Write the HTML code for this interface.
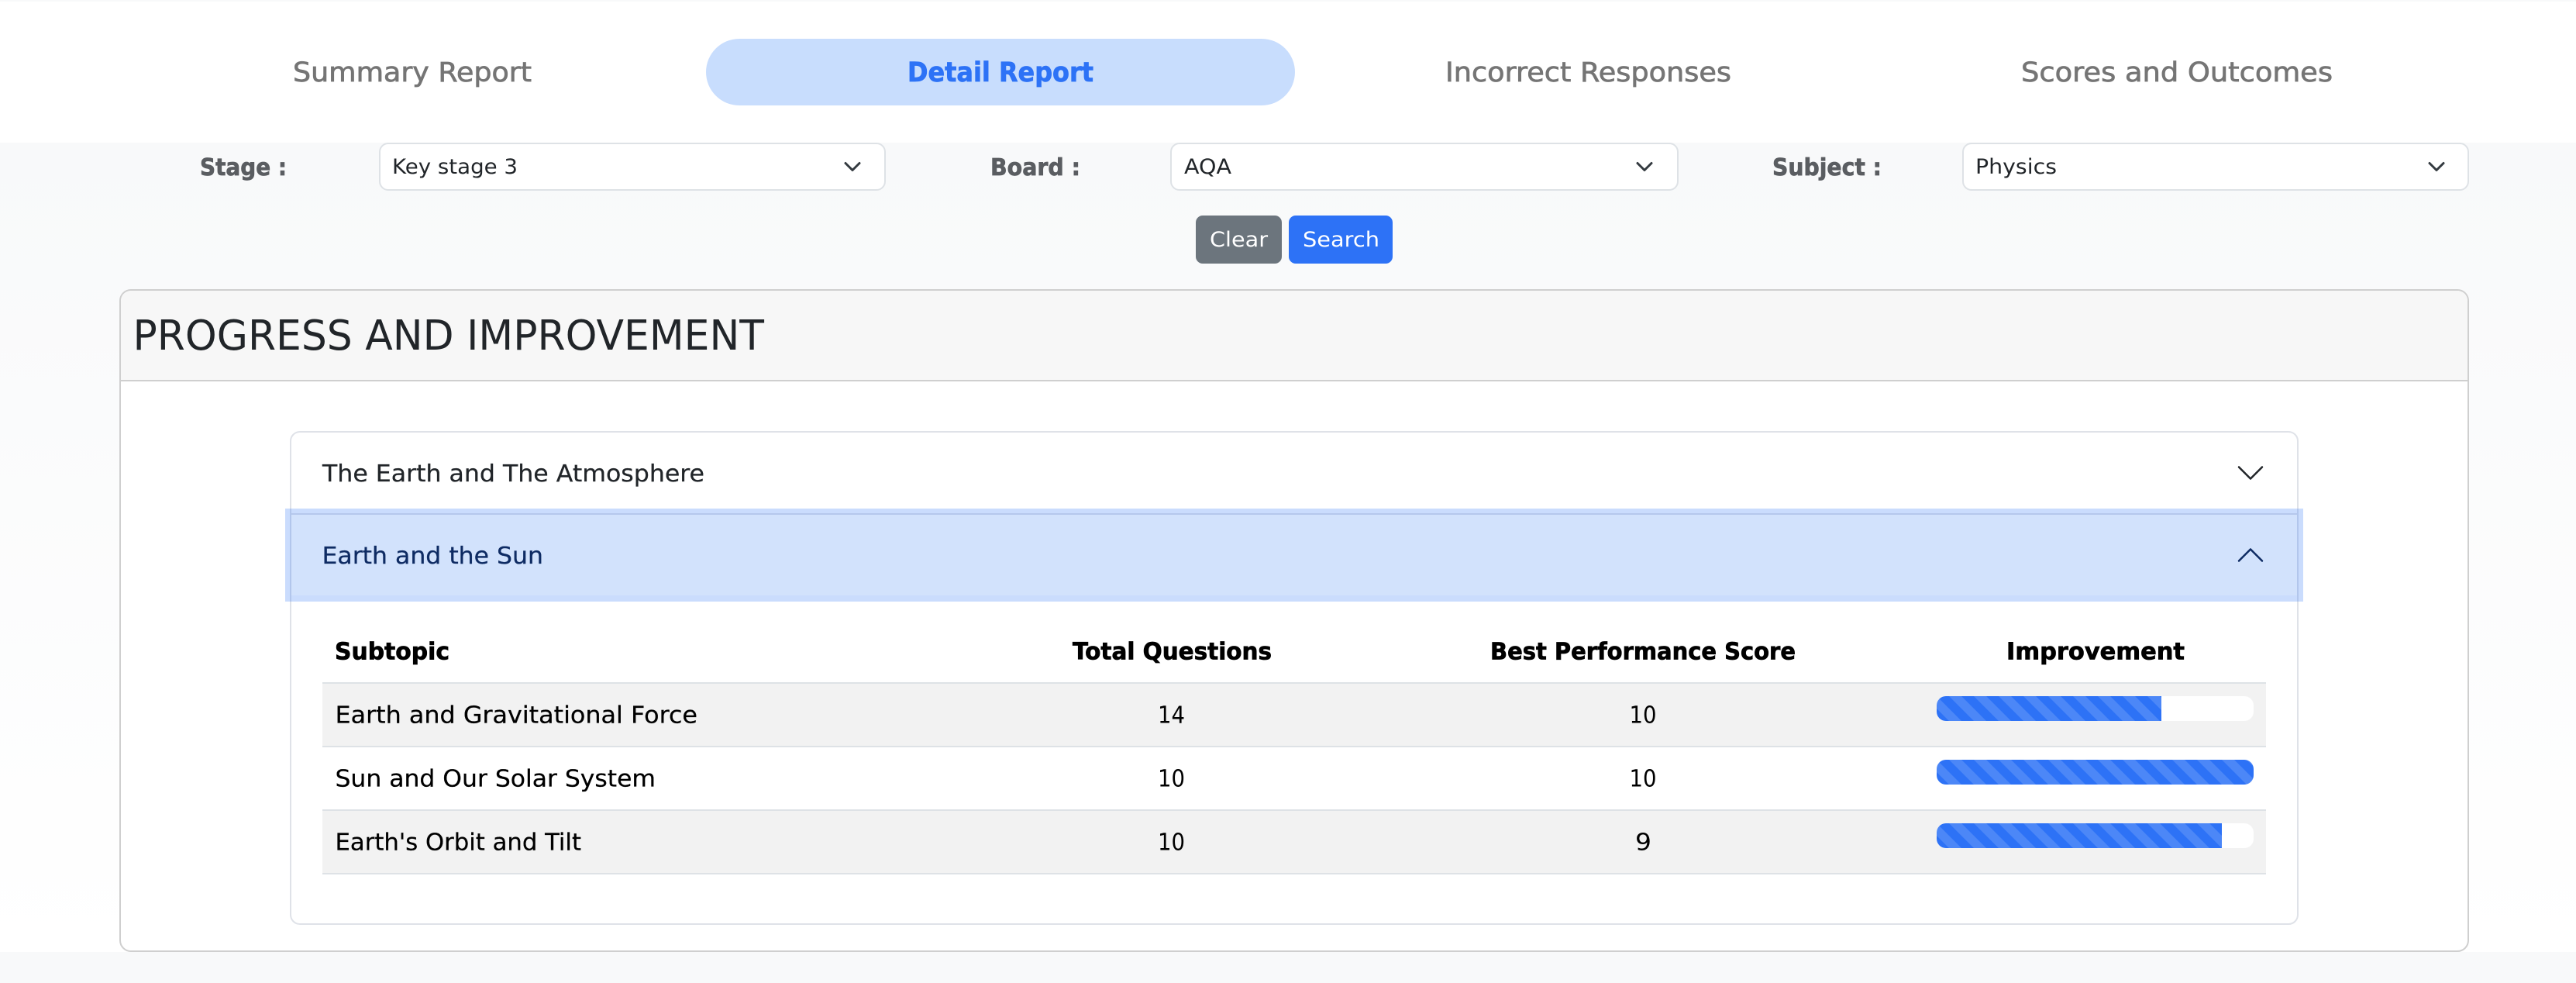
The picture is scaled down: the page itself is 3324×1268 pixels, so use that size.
<!DOCTYPE html>
<html lang="en">
<head>
<meta charset="utf-8">
<title>Detail Report</title>
<style>
html,body{margin:0;padding:0;width:3324px;height:1268px;overflow:hidden;background:#f8f9fa}
svg{display:block}
text{font-family:"DejaVu Sans","Liberation Sans",sans-serif}
.b{font-weight:700;stroke-width:.7px}
.m{stroke-width:.7px}
.r{stroke-width:.25px}
</style>
</head>
<body>
<svg xmlns="http://www.w3.org/2000/svg" width="3324" height="1268" viewBox="0 0 3324 1268">
<defs>
<linearGradient id="bg" x1="0" y1="184" x2="0" y2="1228" gradientUnits="userSpaceOnUse">
<stop offset="0" stop-color="#f8f9fa"/><stop offset="1" stop-color="#ffffff"/>
</linearGradient>
<pattern id="st1" patternUnits="userSpaceOnUse" x="2499" y="898" width="32" height="32">
<rect width="32" height="32" fill="#2d72f6"/>
<polygon points="0,0 32,32 16,32 0,16" fill="#fff" fill-opacity=".15"/>
<polygon points="16,0 32,0 32,16" fill="#fff" fill-opacity=".15"/>
</pattern>
<pattern id="st2" patternUnits="userSpaceOnUse" x="2499" y="980" width="32" height="32">
<rect width="32" height="32" fill="#2d72f6"/>
<polygon points="0,0 32,32 16,32 0,16" fill="#fff" fill-opacity=".15"/>
<polygon points="16,0 32,0 32,16" fill="#fff" fill-opacity=".15"/>
</pattern>
<pattern id="st3" patternUnits="userSpaceOnUse" x="2499" y="1062" width="32" height="32">
<rect width="32" height="32" fill="#2d72f6"/>
<polygon points="0,0 32,32 16,32 0,16" fill="#fff" fill-opacity=".15"/>
<polygon points="16,0 32,0 32,16" fill="#fff" fill-opacity=".15"/>
</pattern>
<clipPath id="c1"><rect x="2499" y="898" width="409" height="32" rx="12"/></clipPath>
<clipPath id="c2"><rect x="2499" y="980" width="409" height="32" rx="12"/></clipPath>
<clipPath id="c3"><rect x="2499" y="1062" width="409" height="32" rx="12"/></clipPath>
</defs>

<!-- page -->
<rect width="3324" height="1268" fill="#f8f9fa"/>
<rect y="184" width="3324" height="1044" fill="url(#bg)"/>

<!-- tabs -->
<rect y="2" width="3324" height="182" fill="#ffffff"/>
<rect x="911" y="50" width="760" height="86" rx="43" fill="#c8ddfd"/>
<text class="m" x="378" y="105" font-size="34.5" fill="#757575" stroke="#757575" textLength="308" lengthAdjust="spacingAndGlyphs">Summary Report</text>
<text class="b" x="1171" y="105" font-size="34.5" fill="#2d72f6" stroke="#2d72f6" textLength="240" lengthAdjust="spacingAndGlyphs">Detail Report</text>
<text class="m" x="1865" y="105" font-size="34.5" fill="#757575" stroke="#757575" textLength="369" lengthAdjust="spacingAndGlyphs">Incorrect Responses</text>
<text class="m" x="2608" y="105" font-size="34.5" fill="#757575" stroke="#757575" textLength="402" lengthAdjust="spacingAndGlyphs">Scores and Outcomes</text>

<!-- filters -->
<text class="b" x="258" y="226" font-size="30.5" fill="#5a5d61" stroke="#5a5d61" textLength="112" lengthAdjust="spacingAndGlyphs">Stage :</text>
<text class="b" x="1278" y="226" font-size="30.5" fill="#5a5d61" stroke="#5a5d61" textLength="116" lengthAdjust="spacingAndGlyphs">Board :</text>
<text class="b" x="2287" y="226" font-size="30.5" fill="#5a5d61" stroke="#5a5d61" textLength="141" lengthAdjust="spacingAndGlyphs">Subject :</text>

<rect x="490" y="185" width="652" height="60" rx="11" fill="#fff" stroke="#dee2e6" stroke-width="2"/>
<text x="506" y="224" font-size="27" fill="#212529" textLength="162" lengthAdjust="spacingAndGlyphs">Key stage 3</text>
<path d="M1091 210.500l9 9 9-9" fill="none" stroke="#343a40" stroke-width="3" stroke-linecap="round" stroke-linejoin="round"/>

<rect x="1511" y="185" width="654" height="60" rx="11" fill="#fff" stroke="#dee2e6" stroke-width="2"/>
<text x="1528" y="224" font-size="27" fill="#212529" textLength="61" lengthAdjust="spacingAndGlyphs">AQA</text>
<path d="M2113 210.500l9 9 9-9" fill="none" stroke="#343a40" stroke-width="3" stroke-linecap="round" stroke-linejoin="round"/>

<rect x="2533" y="185" width="652" height="60" rx="11" fill="#fff" stroke="#dee2e6" stroke-width="2"/>
<text x="2549" y="224" font-size="27" fill="#212529" textLength="105" lengthAdjust="spacingAndGlyphs">Physics</text>
<path d="M3135 210.500l9 9 9-9" fill="none" stroke="#343a40" stroke-width="3" stroke-linecap="round" stroke-linejoin="round"/>

<!-- buttons -->
<rect x="1543" y="278" width="111" height="62" rx="9" fill="#6c757d"/>
<text x="1561" y="318" font-size="27" fill="#fff" textLength="75" lengthAdjust="spacingAndGlyphs">Clear</text>
<rect x="1663" y="278" width="134" height="62" rx="9" fill="#2d72f6"/>
<text x="1681" y="318" font-size="27" fill="#fff" textLength="99" lengthAdjust="spacingAndGlyphs">Search</text>

<!-- card -->
<rect x="155" y="374" width="3030" height="853" rx="14" fill="#fff" stroke="#cfcfcf" stroke-width="2"/>
<path d="M156 491V389a14 14 0 0 1 14-14H3170a14 14 0 0 1 14 14V491z" fill="#f7f7f7"/>
<rect x="155" y="490" width="3030" height="2" fill="#cfcfcf"/>
<text x="171.500" y="451" font-size="53.500" fill="#212529" textLength="814.500" lengthAdjust="spacingAndGlyphs">PROGRESS AND IMPROVEMENT</text>

<!-- accordion -->
<rect x="375" y="557" width="2590" height="635" rx="12" fill="#fff" stroke="#dfe2e8" stroke-width="2"/>
<text class="r" x="416" y="621" font-size="30.500" fill="#212529" stroke="#212529" textLength="493" lengthAdjust="spacingAndGlyphs">The Earth and The Atmosphere</text>
<svg x="2884" y="590" width="40" height="40" viewBox="0 0 16 16"><path fill="#212529" d="M1.646 4.646a.5.5 0 0 1 .708 0L8 10.293l5.646-5.647a.5.500 0 0 1 .708.708l-6 6a.5.500 0 0 1-.708 0l-6-6a.5.500 0 0 1 0-.708z"/></svg>

<rect x="368" y="656" width="2604" height="120" fill="#2d72f6" fill-opacity=".25"/>
<rect x="376" y="662" width="2588" height="2" fill="#b5c7ec"/>
<rect x="376" y="664" width="2588" height="104" fill="#d2e2fc"/>
<text class="r" x="415.500" y="727" font-size="30.500" fill="#0e2b63" stroke="#0e2b63" textLength="285.500" lengthAdjust="spacingAndGlyphs">Earth and the Sun</text>
<svg x="2884" y="696" width="40" height="40" viewBox="0 0 16 16"><g transform="rotate(180 8 8)"><path fill="#0e2b63" d="M1.646 4.646a.5.5 0 0 1 .708 0L8 10.293l5.646-5.647a.5.500 0 0 1 .708.708l-6 6a.5.500 0 0 1-.708 0l-6-6a.5.500 0 0 1 0-.708z"/></g></svg>

<!-- table -->
<text class="b" x="432" y="850.500" font-size="30" fill="#000" stroke="#000" textLength="148" lengthAdjust="spacingAndGlyphs">Subtopic</text>
<text class="b" x="1384" y="850.500" font-size="30" fill="#000" stroke="#000" textLength="257" lengthAdjust="spacingAndGlyphs">Total Questions</text>
<text class="b" x="1923" y="850.500" font-size="30" fill="#000" stroke="#000" textLength="394" lengthAdjust="spacingAndGlyphs">Best Performance Score</text>
<text class="b" x="2589" y="850.500" font-size="30" fill="#000" stroke="#000" textLength="230" lengthAdjust="spacingAndGlyphs">Improvement</text>

<rect x="416" y="882" width="2508" height="80" fill="#f2f2f2"/>
<rect x="416" y="964" width="2508" height="80" fill="#fff"/>
<rect x="416" y="1046" width="2508" height="80" fill="#f2f2f2"/>
<rect x="416" y="880" width="2508" height="2" fill="#dee2e6"/>
<rect x="416" y="962" width="2508" height="2" fill="#dee2e6"/>
<rect x="416" y="1044" width="2508" height="2" fill="#dee2e6"/>
<rect x="416" y="1126" width="2508" height="2" fill="#dee2e6"/>

<text class="r" x="432.500" y="932.500" font-size="30.500" fill="#000" stroke="#000" textLength="467.500" lengthAdjust="spacingAndGlyphs">Earth and Gravitational Force</text>
<text class="r" x="432.500" y="1014.500" font-size="30.500" fill="#000" stroke="#000" textLength="413.500" lengthAdjust="spacingAndGlyphs">Sun and Our Solar System</text>
<text class="r" x="432.500" y="1096.500" font-size="30.500" fill="#000" stroke="#000" textLength="317.500" lengthAdjust="spacingAndGlyphs">Earth's Orbit and Tilt</text>

<text x="1494" y="932.500" font-size="30.500" fill="#000" textLength="35" lengthAdjust="spacingAndGlyphs">14</text>
<text x="1494" y="1014.500" font-size="30.500" fill="#000" textLength="35" lengthAdjust="spacingAndGlyphs">10</text>
<text x="1494" y="1096.500" font-size="30.500" fill="#000" textLength="35" lengthAdjust="spacingAndGlyphs">10</text>
<text x="2102.500" y="932.500" font-size="30.500" fill="#000" textLength="35" lengthAdjust="spacingAndGlyphs">10</text>
<text x="2102.500" y="1014.500" font-size="30.500" fill="#000" textLength="35" lengthAdjust="spacingAndGlyphs">10</text>
<text x="2110" y="1096.500" font-size="30.500" fill="#000" textLength="21" lengthAdjust="spacingAndGlyphs">9</text>

<!-- progress bars -->
<rect x="2499" y="898" width="409" height="32" rx="12" fill="#fff"/>
<rect x="2499" y="898" width="290" height="32" fill="url(#st1)" clip-path="url(#c1)"/>
<rect x="2499" y="980" width="409" height="32" rx="12" fill="#fff"/>
<rect x="2499" y="980" width="409" height="32" fill="url(#st2)" clip-path="url(#c2)"/>
<rect x="2499" y="1062" width="409" height="32" rx="12" fill="#fff"/>
<rect x="2499" y="1062" width="368" height="32" fill="url(#st3)" clip-path="url(#c3)"/>
</svg>
</body>
</html>
